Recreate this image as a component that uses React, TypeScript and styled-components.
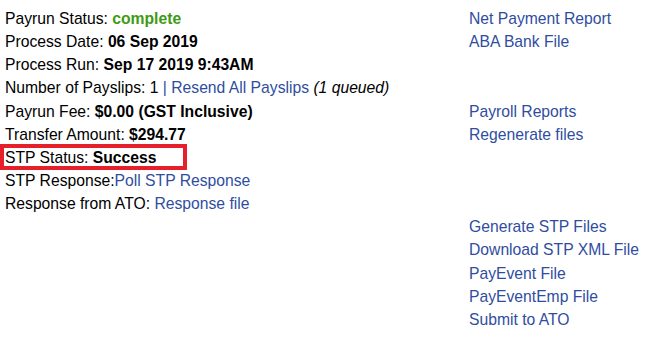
import React from 'react'
import styled, { createGlobalStyle } from 'styled-components'

const GlobalStyle = createGlobalStyle`
  body {
    margin: 0;
    background: #ffffff;
    font-family: Arial, 'Liberation Sans', sans-serif;
    color: #000000;
  }
`

const Div_Page = styled.div`
  display: flex;
  padding: 7px 0 0 5px;
  font-size: 15.7px;
  line-height: 23.15px;
`

const Div_Details = styled.div`
  width: 464px;
  display: flex;
  flex-direction: column;
`

const Div_Links = styled.div`
  display: flex;
  flex-direction: column;
`

const Div_Line = styled.div<{ $boxed?: boolean }>`
  position: relative;
  white-space: nowrap;
  height: 23.15px;
  ${(p) =>
    p.$boxed &&
    `
    &::after {
      content: '';
      position: absolute;
      left: -5px;
      top: -2px;
      width: 187px;
      height: 26px;
      box-sizing: border-box;
      border: 4px solid #e5202a;
    }
  `}
`

const Div_Spacer = styled.div<{ $rows: number }>`
  height: ${(p) => p.$rows * 23.15}px;
`

const B_Value = styled.b`
  font-weight: 700;
`

const B_Complete = styled.b`
  font-weight: 700;
  color: #3d9b14;
`

const A_Link = styled.a`
  color: #2f4d9f;
  text-decoration: none;
`

const I_Queued = styled.i`
  font-style: italic;
`

export default function App() {
  return (
    <>
      <GlobalStyle />
      <Div_Page>
        <Div_Details>
          <Div_Line>
            Payrun Status: <B_Complete>complete</B_Complete>
          </Div_Line>
          <Div_Line>
            Process Date: <B_Value>06 Sep 2019</B_Value>
          </Div_Line>
          <Div_Line>
            Process Run: <B_Value>Sep 17 2019 9:43AM</B_Value>
          </Div_Line>
          <Div_Line>
            Number of Payslips: 1 <A_Link href='#'>| Resend All Payslips</A_Link>{' '}
            <I_Queued>(1 queued)</I_Queued>
          </Div_Line>
          <Div_Line>
            Payrun Fee: <B_Value>$0.00 (GST Inclusive)</B_Value>
          </Div_Line>
          <Div_Line>
            Transfer Amount: <B_Value>$294.77</B_Value>
          </Div_Line>
          <Div_Line $boxed>
            STP Status: <B_Value>Success</B_Value>
          </Div_Line>
          <Div_Line>
            STP Response:<A_Link href='#'>Poll STP Response</A_Link>
          </Div_Line>
          <Div_Line>
            Response from ATO: <A_Link href='#'>Response file</A_Link>
          </Div_Line>
        </Div_Details>
        <Div_Links>
          <Div_Line>
            <A_Link href='#'>Net Payment Report</A_Link>
          </Div_Line>
          <Div_Line>
            <A_Link href='#'>ABA Bank File</A_Link>
          </Div_Line>
          <Div_Spacer $rows={2} />
          <Div_Line>
            <A_Link href='#'>Payroll Reports</A_Link>
          </Div_Line>
          <Div_Line>
            <A_Link href='#'>Regenerate files</A_Link>
          </Div_Line>
          <Div_Spacer $rows={3} />
          <Div_Line>
            <A_Link href='#'>Generate STP Files</A_Link>
          </Div_Line>
          <Div_Line>
            <A_Link href='#'>Download STP XML File</A_Link>
          </Div_Line>
          <Div_Line>
            <A_Link href='#'>PayEvent File</A_Link>
          </Div_Line>
          <Div_Line>
            <A_Link href='#'>PayEventEmp File</A_Link>
          </Div_Line>
          <Div_Line>
            <A_Link href='#'>Submit to ATO</A_Link>
          </Div_Line>
        </Div_Links>
      </Div_Page>
    </>
  )
}
